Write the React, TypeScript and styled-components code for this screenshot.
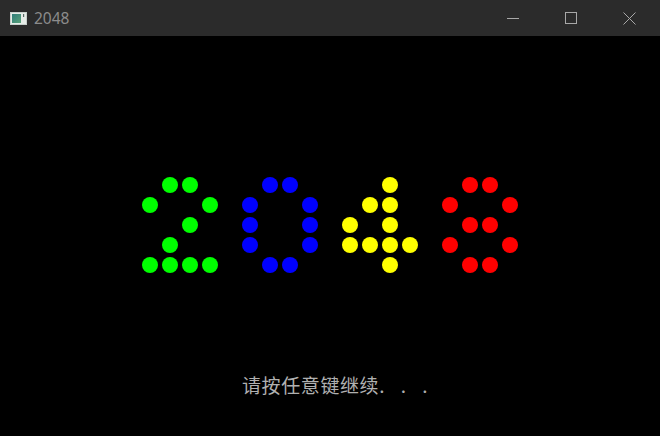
import React from "react";
import styled, { createGlobalStyle } from "styled-components";

const Global = createGlobalStyle`
  html, body { margin: 0; padding: 0; background: #000; }
  #root { width: 660px; height: 436px; }
`;

const Window = styled.div`
  width: 660px;
  height: 436px;
  display: flex;
  flex-direction: column;
  background: #000;
  overflow: hidden;
`;

const TitleBar = styled.div`
  height: 36px;
  flex: none;
  background: #2b2b2b;
  display: flex;
  align-items: center;
`;

const AppIcon = styled.div`
  width: 30px;
  display: flex;
  justify-content: center;
  padding-left: 3px;
`;

const Title = styled.div`
  font-family: "Noto Sans", "Open Sans", sans-serif;
  font-size: 15.5px;
  color: #8c8c8c;
  margin-left: 1px;
  flex: 1;
`;

const Controls = styled.div`
  display: flex;
  height: 100%;
  padding-right: 2px;
`;

const ControlButton = styled.div`
  width: 58px;
  height: 100%;
  display: flex;
  align-items: center;
  justify-content: center;
  color: #a0a0a0;
`;

const Content = styled.div`
  flex: 1;
  display: flex;
  flex-direction: column;
  align-items: center;
`;

const DotGrid = styled.div`
  margin-top: 139px;
  display: grid;
  grid-template-columns: repeat(19, 20px);
  grid-template-rows: repeat(5, 20px);
`;

const Cell = styled.div`
  display: flex;
  align-items: center;
  justify-content: center;
`;

const Dot = styled.div<{ $color: string }>`
  width: 16px;
  height: 16px;
  border-radius: 50%;
  background: ${(p) => p.$color};
`;

const Prompt = styled.div`
  margin-top: 99px;
  align-self: flex-start;
  padding-left: 242px;
  font-family: "Noto Sans CJK SC", sans-serif;
  font-size: 19px;
  line-height: 22px;
  color: #b0b0b0;
  white-space: pre;
`;

const Cjk = styled.span`
  letter-spacing: 0.6px;
`;

const Dots = styled.span`
  letter-spacing: 6px;
`;

const digits: { color: string; rows: string[] }[] = [
  { color: "#00ff00", rows: [".##.", "#..#", "..#.", ".#..", "####"] },
  { color: "#0000ff", rows: [".##.", "#..#", "#..#", "#..#", ".##."] },
  { color: "#ffff00", rows: ["..#.", ".##.", "#.#.", "####", "..#."] },
  { color: "#ff0000", rows: [".##.", "#..#", ".##.", "#..#", ".##."] },
];

function buildCells() {
  const cells: React.ReactNode[] = [];
  for (let r = 0; r < 5; r++) {
    for (let c = 0; c < 19; c++) {
      const d = Math.floor(c / 5);
      const k = c % 5;
      let color: string | null = null;
      if (k < 4 && digits[d] && digits[d].rows[r][k] === "#") color = digits[d].color;
      cells.push(<Cell key={`${r}-${c}`}>{color && <Dot $color={color} />}</Cell>);
    }
  }
  return cells;
}

export default function App() {
  return (
    <>
      <Global />
      <Window>
        <TitleBar>
          <AppIcon>
            <svg width="17" height="13" viewBox="0 0 17 13">
              <defs>
                <linearGradient id="g" x1="0" y1="0" x2="1" y2="1">
                  <stop offset="0" stopColor="#2f7d7a" />
                  <stop offset="1" stopColor="#5aa27a" />
                </linearGradient>
              </defs>
              <rect x="0.5" y="0.5" width="16" height="12" fill="#e6ece8" stroke="#c8d0cc" />
              <rect x="2" y="2" width="9" height="9" fill="url(#g)" />
              <rect x="13" y="2" width="1.2" height="3" fill="#5a6a66" />
            </svg>
          </AppIcon>
          <Title>2048</Title>
          <Controls>
            <ControlButton>
              <svg width="12" height="12" viewBox="0 0 12 12">
                <line x1="0" y1="6.5" x2="12" y2="6.5" stroke="#a8a8a8" strokeWidth="1" />
              </svg>
            </ControlButton>
            <ControlButton>
              <svg width="12" height="12" viewBox="0 0 12 12">
                <rect x="0.5" y="0.5" width="11" height="11" fill="none" stroke="#a8a8a8" strokeWidth="1" />
              </svg>
            </ControlButton>
            <ControlButton>
              <svg width="13" height="13" viewBox="0 0 13 13">
                <path d="M0.5 0.5 L12.5 12.5 M12.5 0.5 L0.5 12.5" stroke="#a8a8a8" strokeWidth="1" />
              </svg>
            </ControlButton>
          </Controls>
        </TitleBar>
        <Content>
          <DotGrid>{buildCells()}</DotGrid>
          <Prompt>
            <Cjk>请按任意键继续</Cjk>
            <Dots>. . .</Dots>
          </Prompt>
        </Content>
      </Window>
    </>
  );
}
